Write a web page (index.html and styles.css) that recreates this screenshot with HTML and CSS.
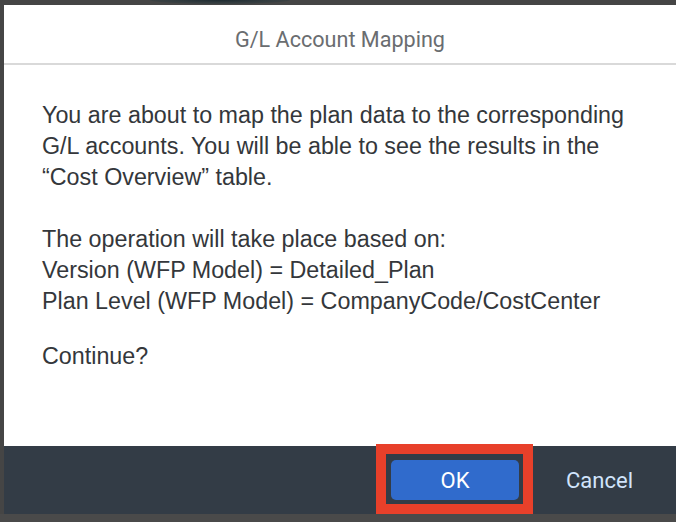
FILE: index.html
```html
<!DOCTYPE html>
<html lang="en">
<head>
<meta charset="utf-8">
<title>G/L Account Mapping</title>
<link rel="stylesheet" href="styles.css">
</head>
<body>
<div class="screen">
  <div class="backdrop-top"><span class="blob"></span></div>
  <div class="row">
    <div class="side-strip"></div>
    <div class="dialog">
      <header class="dialog-header">
        <h1 class="dialog-title">G/L Account Mapping</h1>
      </header>
      <div class="dialog-content">
        <p class="para para-first">You are about to map the plan data to the corresponding G/L accounts. You will be able to see the results in the “Cost Overview” table.</p>
        <p class="para para-second">The operation will take place based on:<br>Version (WFP Model) = Detailed_Plan<br>Plan Level (WFP Model) = CompanyCode/CostCenter</p>
        <p class="para para-third">Continue?</p>
      </div>
      <footer class="dialog-footer">
        <button class="btn btn-primary" type="button">OK</button>
        <button class="btn btn-ghost" type="button">Cancel</button>
        <span class="highlight"></span>
      </footer>
    </div>
  </div>
</div>
</body>
</html>
```

FILE: styles.css
```css
* { box-sizing: border-box; }
html, body { margin: 0; padding: 0; }
body {
  width: 676px;
  height: 522px;
  overflow: hidden;
  background: #4a4a4a;
}
.screen {
  display: flex;
  flex-direction: column;
  height: 522px;
}
.backdrop-top {
  height: 5px;
  background: #454545;
  position: relative;
  overflow: hidden;
}
.blob {
  position: absolute;
  left: 150px;
  top: -4px;
  width: 140px;
  height: 8px;
  border-radius: 50%;
  background: radial-gradient(ellipse at center, #1d2a30 0%, rgba(40,55,60,0.6) 50%, rgba(69,69,69,0) 100%);
}
.row {
  display: flex;
}
.side-strip {
  width: 4px;
  background: #454545;
}
.dialog {
  flex: 1;
  height: 509px;
  background: #ffffff;
  display: flex;
  flex-direction: column;
}
.dialog-header {
  height: 60px;
  border-bottom: 2px solid #d9d9d9;
  display: flex;
  align-items: center;
  justify-content: center;
  padding-top: 11px;
}
.dialog-title {
  margin: 0;
  font-family: Roboto, "Open Sans", sans-serif;
  font-weight: 400;
  font-size: 21.6px;
  color: #6a6d70;
}
.dialog-content {
  flex: 1;
  width: 632px;
  padding: 35px 0 0 38px;
  font-family: "Liberation Sans", Arial, sans-serif;
  font-size: 23.3px;
  line-height: 31px;
  color: #34373b;
}
.para { margin: 0; }
.para-second { margin-top: 31px; }
.para-third { margin-top: 24px; }
.dialog-footer {
  position: relative;
  height: 68px;
  background: #333c46;
  display: flex;
  align-items: center;
  justify-content: flex-end;
  padding-right: 33px;
  gap: 37px;
}
.btn {
  font-family: Roboto, "Open Sans", sans-serif;
  font-size: 22px;
  height: 40px;
  border: none;
  border-radius: 5px;
  cursor: pointer;
}
.btn-primary {
  width: 128px;
  background: #306bcc;
  color: #ffffff;
}
.btn-ghost {
  background: transparent;
  color: #d1e4fb;
  padding: 0 10px;
}
.highlight {
  position: absolute;
  left: 372px;
  top: -2px;
  width: 157px;
  height: 70px;
  border: 10px solid #e8402a;
  pointer-events: none;
}
```
